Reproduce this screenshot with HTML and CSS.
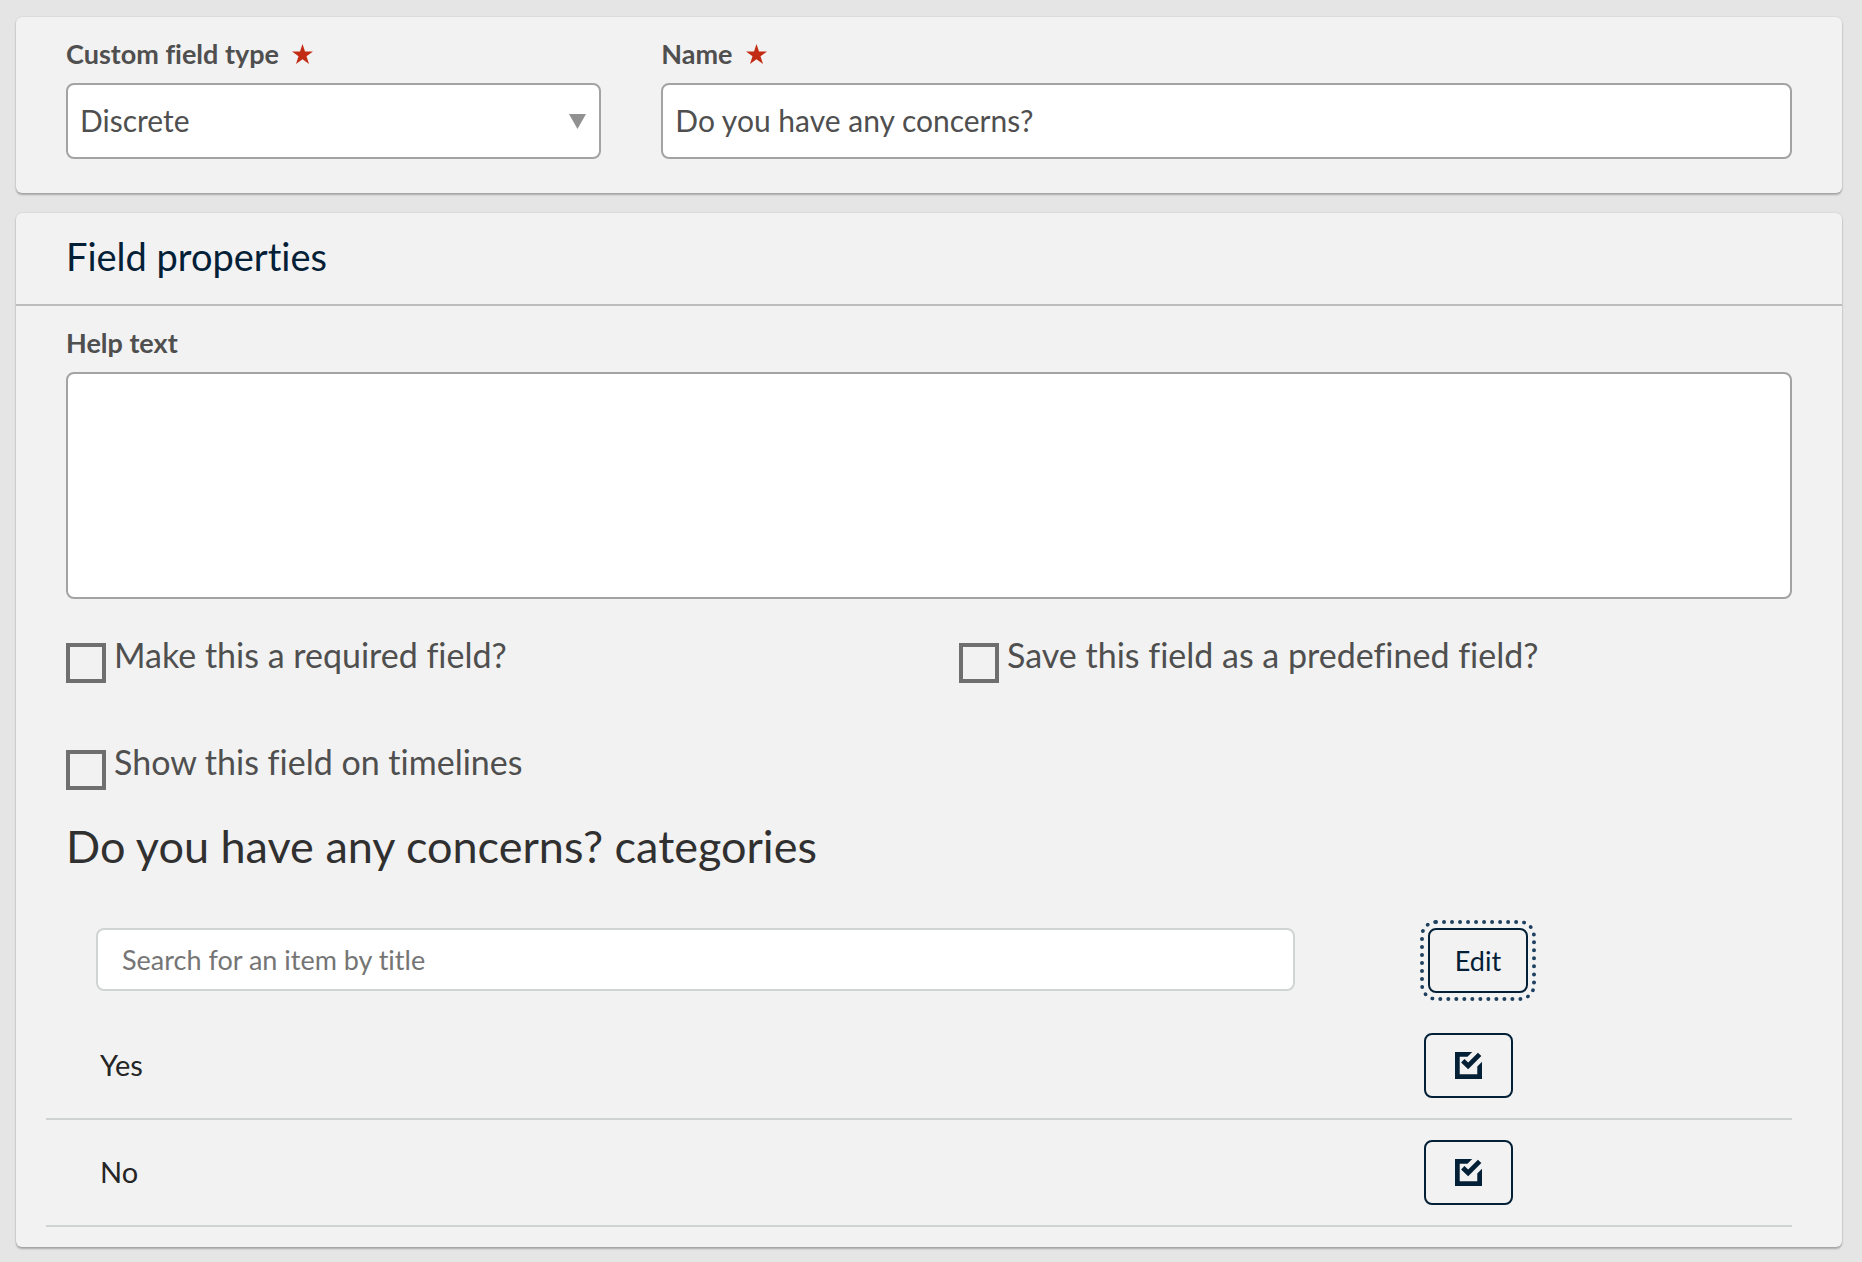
FILE: index.html
```html
<!DOCTYPE html>
<html lang="en">
<head>
<meta charset="utf-8">
<meta name="viewport" content="width=device-width, initial-scale=1">
<title>Custom field</title>
<link rel="stylesheet" href="styles.css">
</head>
<body>
<svg class="sprite" aria-hidden="true">
  <symbol id="star" viewBox="0 0 21 20"><path d="M10.500 0 13 7.600H21L14.500 12.300 17 20 10.500 15.300 4 20 6.500 12.300 0 7.600H8Z"/></symbol>
  <symbol id="check" viewBox="0 0 80 80"><path d="M51 0H0V80H80V29L66 43V66H14V14H37Z"/><path d="M18 31 28 21 39 31 68 2 78 12 39 51Z"/></symbol>
</svg>
<form class="page">
  <section class="card basics">
    <div class="field">
      <label class="label" for="type">Custom field type <svg class="star"><use href="#star"/></svg></label>
      <div class="select">
        <select class="control" id="type"><option>Discrete</option></select>
        <svg class="caret" viewBox="0 0 17 15" aria-hidden="true"><path d="M0 0H17L8.500 15Z"/></svg>
      </div>
    </div>
    <div class="field">
      <label class="label" for="name">Name <svg class="star"><use href="#star"/></svg></label>
      <input class="control" id="name" type="text" value="Do you have any concerns?">
    </div>
  </section>

  <section class="card">
    <h2 class="card-title">Field properties</h2>
    <div class="card-body">
      <div class="field">
        <label class="label" for="help">Help text</label>
        <textarea class="control help" id="help"></textarea>
      </div>
      <div class="options">
        <label class="option"><input class="box" type="checkbox">Make this a required field?</label>
        <label class="option"><input class="box" type="checkbox">Save this field as a predefined field?</label>
        <label class="option"><input class="box" type="checkbox">Show this field on timelines</label>
      </div>
      <h1 class="heading">Do you have any concerns? categories</h1>
      <div class="categories">
        <div class="row search-row">
          <input class="search" type="search" placeholder="Search for an item by title" aria-label="Search for an item by title">
          <div class="edit-cell"><button class="button edit" type="button">Edit</button></div>
        </div>
        <ul class="list">
          <li class="row item"><span>Yes</span><div><button class="button pick" type="button" aria-label="Select Yes"><svg class="check"><use href="#check"/></svg></button></div></li>
          <li class="row item"><span>No</span><div><button class="button pick" type="button" aria-label="Select No"><svg class="check"><use href="#check"/></svg></button></div></li>
        </ul>
      </div>
    </div>
  </section>
</form>
</body>
</html>
```
FILE: styles.css
```css
* { box-sizing: border-box; }
body { margin: 0; background: #e5e5e5; color: #4f4f4f; font-family: Lato, "Open Sans", sans-serif; font-variant-ligatures: none; }
input, select, textarea, button { font: inherit; font-variant-ligatures: none; color: inherit; margin: 0; }
.sprite { display: none; }

.page { display: flex; flex-direction: column; gap: 20px; padding: 17px 20px 15px 16px; }
.card { background: #f2f2f2; border-radius: 6px; box-shadow: 0 2px 2px rgba(0, 0, 0, .26), 0 0 2px rgba(0, 0, 0, .14); }
.basics { display: grid; grid-template-columns: 535fr 1130fr; gap: 60px; padding: 21px 50px 34px; }
.card-title { margin: 0; padding: 0 50px 4px; border-bottom: 2px solid #bdbdbd; color: #042037; font-size: 38px; font-weight: 400; line-height: 87px; }
.card-body { padding: 21px 50px 20px; }

.field { display: flex; flex-direction: column; gap: 13px; min-width: 0; }
.label { display: flex; align-items: center; gap: 13px; font-size: 27px; font-weight: 700; line-height: 32px; }
.star { width: 21px; height: 20px; fill: #c22c14; }
.control { display: block; width: 100%; height: 76px; padding: 0 12px 2px; background: #fff; border: 2px solid #a3a3a3; border-radius: 8px; font-size: 30px; appearance: none; }
.help { height: 227px; padding: 12px; resize: none; }
.select { position: relative; }
.caret { position: absolute; right: 15px; top: 31px; width: 17px; height: 15px; fill: #919191; pointer-events: none; }

.options { display: grid; grid-template-columns: 893fr 833fr; row-gap: 67px; margin-top: 44px; }
.option { display: flex; align-items: flex-start; gap: 8px; font-size: 34px; line-height: 24px; }
.box { flex: none; width: 40px; height: 40px; border: 4px solid #6f6f6f; appearance: none; }

.heading { margin: 32px 0 58px; color: #303030; font-size: 45px; font-weight: 400; line-height: 48px; }
.categories { margin-left: -20px; }
.row { display: grid; grid-template-columns: 1378fr 368fr; align-items: center; }
.search-row { padding-bottom: 20px; align-items: start; }
.search { height: 63px; margin: 0 129px 0 50px; padding: 0 24px; background: #fff; border: 2px solid #d0d4d3; border-radius: 8px; font-size: 27px; appearance: none; }
.search::placeholder { color: #757575; opacity: 1; }
.edit-cell { padding-left: 4px; }
.button { display: flex; align-items: center; justify-content: center; height: 65px; padding: 0; background: transparent; border: 2px solid #042037; border-radius: 8px; color: #042037; }
.edit { width: 100px; font-size: 27px; outline: 4px dotted #1f4060; outline-offset: 4px; }
.pick { width: 89px; }
.check { width: 27px; height: 27px; fill: #042037; }
.list { margin: 0; padding: 0; list-style: none; }
.item { padding: 20px 0; border-bottom: 2px solid #cfd3d2; color: #252525; font-size: 29px; }
.item span { padding: 0 0 2px 54px; }
```
